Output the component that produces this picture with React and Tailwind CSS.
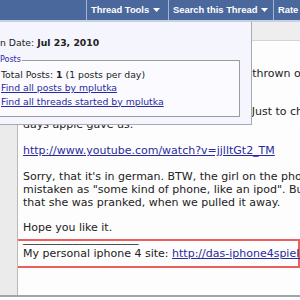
import React from "react";

function Arrow() {
  return (
    <svg width="7" height="4" viewBox="0 0 7 4" className="ml-[4px] shrink-0">
      <path d="M0 0 L7 0 L3.5 4 Z" fill="#ffffff" />
    </svg>
  );
}

function Bar() {
  return (
    <div className="h-[22px] bg-[#4b689d] border-b-2 border-[#c7d0e2] flex justify-end items-stretch font-['Liberation_Sans',sans-serif] font-bold text-[9.4px] text-white whitespace-nowrap">
      <div className="flex items-center pl-[4px] pr-[9px] border-l border-[#a3b3d2] w-[82px]">
        Thread Tools<Arrow />
      </div>
      <div className="flex items-center pl-[4px] pr-[5px] border-l border-[#a3b3d2] w-[105px]">
        Search this Thread<Arrow />
      </div>
      <div className="flex items-center pl-[4px] border-l border-[#a3b3d2] w-[27px] overflow-hidden">
        Rate Thread
      </div>
    </div>
  );
}

function Post() {
  const link = "text-[#2a2aa0] underline";
  return (
    <div className="border-b-2 border-[#a3a3a3]">
      <div className="h-[19px] bg-[#eeeeee] border-b border-[#d4d4d4]" />
      <div className="flex h-[254px]">
        <div className="w-[18px] shrink-0 bg-[#ebebeb] border-r border-[#b9b9b9]" />
        <div className="flex-1 bg-[#fdfdfd] pl-[5px] pt-[26.5px] text-[11px] leading-[12.9px] text-[#222222] whitespace-nowrap overflow-hidden">
          <div>In this prank video a friend of ours saw it thrown on the floor in front of the</div>
          <div>Apple Store.</div>
          <div>&nbsp;</div>
          <div>I also wanted to see her honest reaction. Just to check the new features that in the last few</div>
          <div>days apple gave us.</div>
          <div>&nbsp;</div>
          <div>
            <a className={link}>http://www.youtube.com/watch?v=jjlltGt2_TM</a>
          </div>
          <div>&nbsp;</div>
          <div>Sorry, that it's in german. BTW, the girl on the phone thought the iPhone 4 was</div>
          <div>mistaken as "some kind of phone, like an ipod". But she didn't notice</div>
          <div>that she was pranked, when we pulled it away.</div>
          <div>&nbsp;</div>
          <div>Hope you like it.</div>
          <div className="mt-[4px] ml-[-8px] border-2 border-[#e9605d] pl-[6px] pb-[5px]">
            <div className="mt-[-8.5px]">_____________________</div>
            <div className="mt-[2px]">
              My personal iphone 4 site: <a className={link}>http://das-iphone4spiel.de</a>
            </div>
          </div>
        </div>
      </div>
    </div>
  );
}

function Dropdown() {
  const link = "text-[#2a2aa0] underline";
  return (
    <div className="absolute top-[22px] left-0 w-[252px] h-[103px] bg-[#f5f5fd] border-r border-b border-[#a9a9b4] text-[9.3px] leading-[13.5px] text-[#222222] whitespace-nowrap overflow-hidden">
      <div className="pt-[13.5px] ml-[-11px]">
        Join Date: <span className="font-bold">Jul 23, 2010</span>
      </div>
      <fieldset className="mt-[6px] ml-[-12px] mr-[11px] pl-[12px] pt-[2.5px] pb-[7.5px] border border-[#9c9c9c] bg-[#fbfbff]">
        <legend className="ml-[-1px] pr-[1px] text-[8px] leading-[10px] text-[#2a2aa0]">Posts</legend>
        <div>
          Total Posts: <span className="font-bold">1</span> (1 posts per day)
        </div>
        <div>
          <a className={link}>Find all posts by mplutka</a>
        </div>
        <div>
          <a className={link}>Find all threads started by mplutka</a>
        </div>
      </fieldset>
    </div>
  );
}

export default function App() {
  return (
    <div className="relative w-[300px] h-[300px] overflow-hidden bg-white font-['DejaVu_Sans',sans-serif]">
      <Bar />
      <Post />
      <Dropdown />
    </div>
  );
}
